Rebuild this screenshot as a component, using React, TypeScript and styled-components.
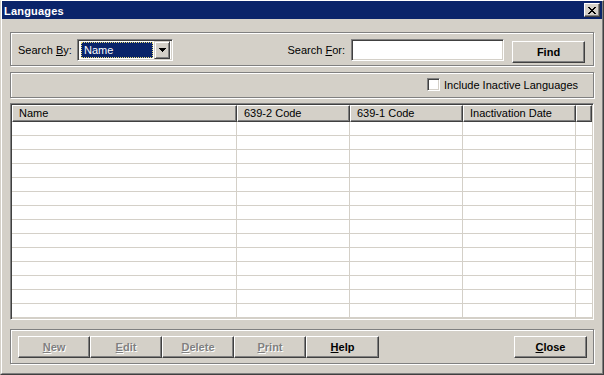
import React from "react";
import styled, { createGlobalStyle } from "styled-components";

const GlobalStyle = createGlobalStyle`
  html, body { margin: 0; padding: 0; background: #d4d0c8; }
  body { font-family: "Liberation Sans", Arial, sans-serif; font-size: 11px; color: #000; }
  * { box-sizing: border-box; }
`;

const Window = styled.div`
  width: 604px;
  height: 375px;
  display: flex;
  flex-direction: column;
  background: #d4d0c8;
  border: 1px solid;
  border-color: #fff #404040 #404040 #d4d0c8;
`;

const WindowInner = styled.div`
  flex: 1;
  display: flex;
  flex-direction: column;
  border-left: 1px solid #fff;
  border-right: 1px solid #808080;
  border-bottom: 1px solid #808080;
`;

const TitleBar = styled.div`
  height: 18px;
  background: #0a246a;
  display: flex;
  align-items: center;
  justify-content: space-between;
  padding: 0 2px 0 2px;
`;

const TitleText = styled.span`
  color: #fff;
  font-weight: bold;
  font-size: 11px;
  font-family: "Liberation Sans", Arial, sans-serif;
  letter-spacing: 0.2px;
  margin-top: 1px;
`;

const CaptionButton = styled.div`
  width: 16px;
  height: 14px;
  background: #d4d0c8;
  border: 1px solid;
  border-color: #fff #404040 #404040 #fff;
  box-shadow: inset -1px -1px #808080;
  display: flex;
  align-items: center;
  justify-content: center;
`;

const Content = styled.div`
  flex: 1;
  display: flex;
  flex-direction: column;
  padding: 13px 8px 0 8px;
`;

const GroovePanel = styled.div<{ $height: number; $mt?: number }>`
  height: ${(p) => p.$height}px;
  margin-top: ${(p) => p.$mt ?? 0}px;
  border: 1px solid #808080;
  box-shadow: inset 1px 1px #fff, 1px 1px #fff;
  display: flex;
`;

const SearchRow = styled(GroovePanel)`
  align-items: flex-start;
  padding: 6px 8px 0 7px;
`;

const Label = styled.span<{ $width?: number; $mr?: number }>`
  height: 22px;
  line-height: 22px;
  white-space: nowrap;
  margin-right: ${(p) => p.$mr ?? 0}px;
  ${(p) => (p.$width ? `width: ${p.$width}px;` : "")}
`;

const Spacer = styled.div`
  flex: 1;
`;

const Sunken = styled.div`
  border: 1px solid;
  border-color: #808080 #fff #fff #808080;
  box-shadow: inset 1px 1px #404040, inset -1px -1px #d4d0c8;
  background: #fff;
`;

const ComboBox = styled(Sunken)`
  width: 96px;
  height: 22px;
  display: flex;
  align-items: center;
  padding: 2px;
  gap: 1px;
`;

const ComboValue = styled.div`
  flex: 1;
  height: 16px;
  margin-left: 1px;
  background: #0a246a;
  color: #fff;
  border: 1px dotted #e8dc7a;
  line-height: 14px;
  padding-left: 2px;
`;

const ComboButton = styled.div`
  width: 16px;
  height: 18px;
  background: #d4d0c8;
  border: 1px solid;
  border-color: #d4d0c8 #404040 #404040 #d4d0c8;
  box-shadow: inset 1px 1px #fff, inset -1px -1px #808080;
  display: flex;
  align-items: center;
  justify-content: center;
`;

const TextInput = styled(Sunken)`
  width: 153px;
  height: 22px;
`;

const PushButton = styled.div<{ $width: number; $disabled?: boolean; $mt?: number; $ml?: number }>`
  width: ${(p) => p.$width}px;
  height: 22px;
  margin-top: ${(p) => p.$mt ?? 0}px;
  margin-left: ${(p) => p.$ml ?? 0}px;
  background: #d4d0c8;
  border: 1px solid;
  border-color: #fff #404040 #404040 #fff;
  box-shadow: inset -1px -1px #808080;
  display: flex;
  align-items: center;
  justify-content: center;
  padding-bottom: 1px;
  font-weight: bold;
  font-size: 11px;
  color: ${(p) => (p.$disabled ? "#808080" : "#000")};
  text-shadow: ${(p) => (p.$disabled ? "1px 1px 0 #fff" : "none")};
  flex-shrink: 0;
`;

const CheckRow = styled(GroovePanel)`
  align-items: center;
  justify-content: flex-end;
  padding: 0 15px 0 0;
`;

const CheckBox = styled(Sunken)`
  width: 13px;
  height: 13px;
  margin-right: 4px;
  margin-bottom: 2px;
`;

const Grid = styled(Sunken)`
  margin-top: 5px;
  height: 217px;
  padding: 1px;
  display: flex;
  flex-direction: column;
  overflow: hidden;
`;

const columns = "225px 113px 113px 113px 16px";

const HeaderRow = styled.div`
  display: grid;
  grid-template-columns: ${columns};
  height: 17px;
  flex-shrink: 0;
`;

const HeaderCell = styled.div`
  background: #d4d0c8;
  border: 1px solid;
  border-color: #fff #404040 #404040 #fff;
  box-shadow: inset -1px -1px #808080;
  padding-left: 6px;
  line-height: 14px;
  font-size: 11px;
  white-space: nowrap;
  overflow: hidden;
`;

const GridBody = styled.div`
  flex: 1;
  background: #fff;
  overflow: hidden;
`;

const GridRow = styled.div`
  display: grid;
  grid-template-columns: ${columns};
  height: 14px;
`;

const GridCell = styled.div`
  border-right: 1px solid #d4d0c8;
  border-bottom: 1px solid #d4d0c8;
  &:last-child { border-right: none; }
`;

const ButtonBar = styled(GroovePanel)`
  align-items: flex-start;
  padding: 6px 6px 0 7px;
`;

const ButtonGroup = styled.div`
  display: flex;
`;

const CloseGlyph = () => (
  <svg width="8" height="7" viewBox="0 0 8 7" shapeRendering="crispEdges">
    <path
      fill="#000"
      d="M0 0h2v1h-2z M6 0h2v1h-2z M1 1h2v1h-2z M5 1h2v1h-2z M2 2h4v1h-4z M3 3h2v1h-2z M2 4h4v1h-4z M1 5h2v1h-2z M5 5h2v1h-2z M0 6h2v1h-2z M6 6h2v1h-2z"
    />
  </svg>
);

const ArrowGlyph = () => (
  <svg width="7" height="4" viewBox="0 0 7 4" shapeRendering="crispEdges">
    <path fill="#000" d="M0 0h7v1h-7z M1 1h5v1h-5z M2 2h3v1h-3z M3 3h1v1h-1z" />
  </svg>
);

const headers = ["Name", "639-2 Code", "639-1 Code", "Inactivation Date", ""];
const rows = Array.from({ length: 15 }, (_, i) => i);

const actionButtons: { first: string; rest: string; disabled: boolean; width: number }[] = [
  { first: "N", rest: "ew", disabled: true, width: 72 },
  { first: "E", rest: "dit", disabled: true, width: 72 },
  { first: "D", rest: "elete", disabled: true, width: 72 },
  { first: "P", rest: "rint", disabled: true, width: 72 },
  { first: "H", rest: "elp", disabled: false, width: 73 },
];

export default function App() {
  return (
    <>
      <GlobalStyle />
      <Window>
        <WindowInner>
          <TitleBar>
            <TitleText>Languages</TitleText>
            <CaptionButton>
              <CloseGlyph />
            </CaptionButton>
          </TitleBar>
          <Content>
            <SearchRow $height={34}>
              <Label $width={59}>
                Search <u>B</u>y:
              </Label>
              <ComboBox>
                <ComboValue>Name</ComboValue>
                <ComboButton>
                  <ArrowGlyph />
                </ComboButton>
              </ComboBox>
              <Spacer />
              <Label $mr={6}>
                Search <u>F</u>or:
              </Label>
              <TextInput />
              <PushButton $width={73} $mt={2} $ml={8}>
                Find
              </PushButton>
            </SearchRow>
            <CheckRow $height={26} $mt={6}>
              <CheckBox />
              <span>Include Inactive Languages</span>
            </CheckRow>
            <Grid>
              <HeaderRow>
                {headers.map((h, i) => (
                  <HeaderCell key={i}>{h}</HeaderCell>
                ))}
              </HeaderRow>
              <GridBody>
                {rows.map((r) => (
                  <GridRow key={r}>
                    {headers.map((_, c) => (
                      <GridCell key={c} />
                    ))}
                  </GridRow>
                ))}
              </GridBody>
            </Grid>
            <ButtonBar $height={35} $mt={9}>
              <ButtonGroup>
                {actionButtons.map((b) => (
                  <PushButton key={b.first} $width={b.width} $disabled={b.disabled}>
                    <span>
                      <u>{b.first}</u>
                      {b.rest}
                    </span>
                  </PushButton>
                ))}
              </ButtonGroup>
              <Spacer />
              <PushButton $width={73}>
                <span>
                  <u>C</u>lose
                </span>
              </PushButton>
            </ButtonBar>
          </Content>
        </WindowInner>
      </Window>
    </>
  );
}
